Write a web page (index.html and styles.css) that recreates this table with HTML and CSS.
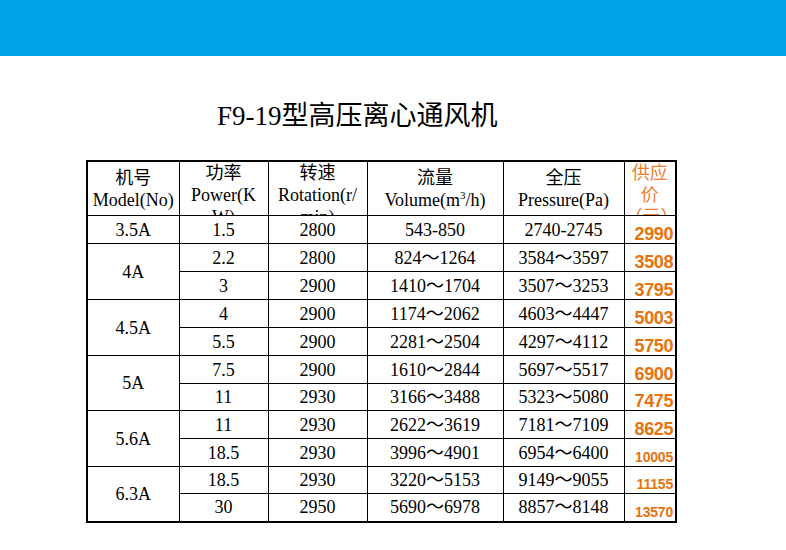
FILE: index.html
```html
<!DOCTYPE html>
<html lang="zh-CN">
<head>
<meta charset="utf-8">
<title>F9-19型高压离心通风机</title>
<link rel="stylesheet" href="styles.css">
</head>
<body>
<header class="topbar"></header>
<main class="content">
  <h1 class="title">F9-19型高压离心通风机</h1>
  <table class="spec">
    <colgroup>
      <col class="c-model">
      <col class="c-power">
      <col class="c-rot">
      <col class="c-vol">
      <col class="c-pres">
      <col class="c-price">
    </colgroup>
    <thead>
      <tr class="head-row">
        <th><div class="hd hd-center">机号<br>Model(No)</div></th>
        <th><div class="hd hd-top">功率<br>Power(K<br>W)</div></th>
        <th><div class="hd hd-top">转速<br>Rotation(r/<br>min)</div></th>
        <th><div class="hd hd-center">流量<br>Volume(m<sup>3</sup>/h)</div></th>
        <th><div class="hd hd-center">全压<br>Pressure(Pa)</div></th>
        <th><div class="hd hd-top hd-price">供应<br>价<br>（元）</div></th>
      </tr>
    </thead>
    <tbody>
      <tr class="r28">
        <td>3.5A</td><td>1.5</td><td>2800</td><td>543-850</td><td>2740-2745</td><td class="price">2990</td>
      </tr>
      <tr class="r28">
        <td rowspan="2">4A</td><td>2.2</td><td>2800</td><td>824～1264</td><td>3584～3597</td><td class="price">3508</td>
      </tr>
      <tr class="r28">
        <td>3</td><td>2900</td><td>1410～1704</td><td>3507～3253</td><td class="price">3795</td>
      </tr>
      <tr class="r28">
        <td rowspan="2">4.5A</td><td>4</td><td>2900</td><td>1174～2062</td><td>4603～4447</td><td class="price">5003</td>
      </tr>
      <tr class="r28">
        <td>5.5</td><td>2900</td><td>2281～2504</td><td>4297～4112</td><td class="price">5750</td>
      </tr>
      <tr class="r28">
        <td rowspan="2">5A</td><td>7.5</td><td>2900</td><td>1610～2844</td><td>5697～5517</td><td class="price">6900</td>
      </tr>
      <tr class="r27">
        <td>11</td><td>2930</td><td>3166～3488</td><td>5323～5080</td><td class="price">7475</td>
      </tr>
      <tr class="r28">
        <td rowspan="2">5.6A</td><td>11</td><td>2930</td><td>2622～3619</td><td>7181～7109</td><td class="price">8625</td>
      </tr>
      <tr class="r28">
        <td>18.5</td><td>2930</td><td>3996～4901</td><td>6954～6400</td><td class="price price-sm">10005</td>
      </tr>
      <tr class="r27">
        <td rowspan="2">6.3A</td><td>18.5</td><td>2930</td><td>3220～5153</td><td>9149～9055</td><td class="price price-sm">11155</td>
      </tr>
      <tr class="r28">
        <td>30</td><td>2950</td><td>5690～6978</td><td>8857～8148</td><td class="price price-sm">13570</td>
      </tr>
    </tbody>
  </table>
</main>
</body>
</html>
```

FILE: styles.css
```css
html, body {
  margin: 0;
  padding: 0;
  background: #ffffff;
}

body {
  font-family: "Liberation Serif", "Noto Sans CJK SC", serif;
  color: #000;
  width: 786px;
  height: 550px;
  overflow: hidden;
}

.topbar {
  height: 56px;
  background: #00a3e8;
}

.content {
  padding-left: 86px;
}

.title {
  margin: 44px 0 0 131px;
  font-weight: normal;
  font-size: 27px;
  line-height: 32px;
  height: 32px;
  white-space: nowrap;
}

.spec {
  margin-top: 28px;
  border-collapse: collapse;
  table-layout: fixed;
  width: 590px;
  border: 2px solid #000;
  font-size: 18px;
}

.c-model { width: 92px; }
.c-power { width: 89px; }
.c-rot { width: 99px; }
.c-vol { width: 136px; }
.c-pres { width: 121px; }
.c-price { width: 52px; }

.spec th,
.spec td {
  border: 1px solid #000;
  padding: 0;
  text-align: center;
  vertical-align: middle;
  font-weight: normal;
  white-space: nowrap;
}

.head-row { height: 54px; }

.hd {
  height: 53px;
  overflow: hidden;
  line-height: 22px;
  box-sizing: border-box;
}

.hd-center {
  padding-top: 5px;
}

.hd-top {
  padding-top: 0;
}

.hd sup {
  font-size: 11px;
  line-height: 0;
  vertical-align: 7px;
}

.hd-price {
  color: #ef7f33;
}

.r28 { height: 28px; }
.r27 { height: 27px; }

.spec td {
  line-height: 20px;
}

.spec td.price {
  font-family: "Liberation Sans", Arial, sans-serif;
  font-weight: bold;
  font-size: 18px;
  color: #e8720c;
  vertical-align: bottom;
  text-align: right;
  padding: 0 2px 0 0;
  line-height: 18px;
  letter-spacing: -0.4px;
}

.spec td.price-sm {
  font-size: 14px;
  line-height: 16px;
  letter-spacing: -0.2px;
  padding-bottom: 1px;
}
```
